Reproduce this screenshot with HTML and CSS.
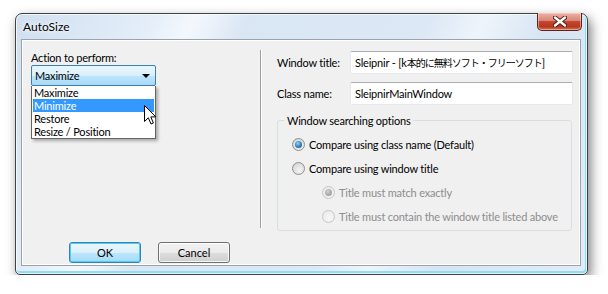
FILE: index.html
```html
<!DOCTYPE html>
<html lang="en">
  <head>
    <meta charset="UTF-8" />
    <title>AutoSize</title>
    <link rel="stylesheet" href="styles.css">
  </head>
  <body>
    <div class="window">
      <div class="titlebar">
        <span class="title">AutoSize</span>
        <button class="close-btn">
          <svg width="14" height="11" viewBox="0 0 14 11">
            <path d="M2 1.5 L12 9.5 M12 1.5 L2 9.5" stroke="#4a1810" stroke-width="4.2" stroke-linecap="round"/>
            <path d="M2 1.5 L12 9.5 M12 1.5 L2 9.5" stroke="#fff" stroke-width="2.4" stroke-linecap="round"/>
          </svg>
        </button>
      </div>

      <div class="client">
        <div class="panes">
          <div class="left-pane">
            <p class="label">Action to perform:</p>
            <div class="combo">
              <span>Maximize</span>
              <span class="combo-arrow"></span>
            </div>
            <ul class="dropdown">
              <li>Maximize</li>
              <li class="selected">Minimize</li>
              <li>Restore</li>
              <li>Resize / Position</li>
            </ul>
          </div>

          <div class="separator"></div>

          <div class="right-pane">
            <div class="field-row">
              <span class="field-label">Window title:</span>
              <div class="textbox">Sleipnir - [k<span class="cjk">本的に無料ソフト・フリーソフト</span>]</div>
            </div>
            <div class="field-row">
              <span class="field-label">Class name:</span>
              <div class="textbox">SleipnirMainWindow</div>
            </div>

            <fieldset class="group">
              <legend>Window searching options</legend>
              <div class="radio-row">
                <span class="radio checked"></span>
                <span>Compare using class name (Default)</span>
              </div>
              <div class="radio-row">
                <span class="radio"></span>
                <span>Compare using window title</span>
              </div>
              <div class="radio-row sub disabled">
                <span class="radio checked"></span>
                <span>Title must match exactly</span>
              </div>
              <div class="radio-row sub disabled">
                <span class="radio"></span>
                <span>Title must contain the window title listed above</span>
              </div>
            </fieldset>
          </div>
        </div>

        <div class="buttons">
          <button class="btn default">OK</button>
          <button class="btn">Cancel</button>
        </div>
      </div>

      <svg class="cursor" width="13" height="21" viewBox="0 0 13 21">
        <path d="M0.5 0.5 L0.5 16.5 L4.3 12.8 L7 19 L9.4 18 L6.8 11.9 L11.8 11.9 Z" fill="#fff" stroke="#000" stroke-width="1"/>
      </svg>
    </div>
  </body>
</html>
```

FILE: styles.css
```css
* {
  margin: 0;
  padding: 0;
  box-sizing: border-box;
}

body {
  background-color: #fff;
  font-family: Lato, "Noto Sans CJK JP", sans-serif;
  font-size: 11px;
  letter-spacing: -0.2px;
  line-height: 15px;
  color: #000;
}

.window {
  position: relative;
  margin: 13px 0 0 15px;
  width: 573px;
  height: 262px;
  padding: 0 6px 8px 5px;
  border: 1px solid #3e4246;
  border-radius: 7px 7px 5px 5px;
  background: linear-gradient(115deg, #cfdff0 0%, #e4eef9 20%, #f4f8fd 26%, #d9e6f4 34%, #dce8f5 60%, #eef4fb 68%, #d6e4f3 78%, #e2ecf7 100%);
  box-shadow: inset 0 0 0 1px rgba(255, 255, 255, 0.75), inset -1px -2px 0 1px #8fdcf3, 3px 5px 12px rgba(0, 0, 0, 0.5);
}

.titlebar {
  display: flex;
  justify-content: space-between;
  align-items: flex-start;
  height: 25px;
}

.title {
  margin: 5px 0 0 2px;
  font-size: 12px;
  letter-spacing: 0;
  text-shadow: 0 0 6px #fff, 0 0 3px #fff;
}

.close-btn {
  display: flex;
  align-items: center;
  justify-content: center;
  width: 45px;
  height: 18px;
  margin: -1px -1px 0 0;
  border: 1px solid #5b2419;
  border-top: none;
  border-radius: 0 0 5px 5px;
  background: linear-gradient(#e9b2a4 0%, #d98575 45%, #c24832 50%, #b8361f 80%, #d2735c 100%);
  box-shadow: inset 0 0 0 1px rgba(255, 220, 210, 0.5);
}

.client {
  height: 227px;
  border: 1px solid #9aa2aa;
  background-color: #f0f0f0;
  box-shadow: inset 0 0 0 1px #fff;
}

.panes {
  display: flex;
  height: 198px;
}

.left-pane {
  flex-shrink: 0;
  width: 238px;
  padding: 10px 0 0 9px;
}

.combo {
  display: flex;
  justify-content: space-between;
  align-items: center;
  width: 125px;
  height: 21px;
  padding: 0 4px 0 3px;
  border: 1px solid #3c7fb1;
  border-radius: 2px;
  background: linear-gradient(#eaf6fd 0%, #d9f0fc 50%, #bee6fd 51%, #a7d9f5 100%);
}

.combo-arrow {
  width: 0;
  height: 0;
  border-left: 4px solid transparent;
  border-right: 4px solid transparent;
  border-top: 4px solid #000;
  margin-right: 1px;
}

.dropdown {
  list-style: none;
  width: 125px;
  padding: 0 1px;
  border: 1px solid #646464;
  border-top: none;
  background-color: #fff;
  box-shadow: 2px 2px 3px rgba(0, 0, 0, 0.3);
}

.dropdown li {
  height: 13px;
  line-height: 13px;
  padding-left: 1px;
}

.dropdown .selected {
  background-color: #3399ff;
  color: #fff;
}

.separator {
  flex-shrink: 0;
  width: 2px;
  height: 178px;
  margin-top: 10px;
  border-left: 1px solid #a0a0a0;
  border-right: 1px solid #fff;
}

.right-pane {
  padding: 11px 0 0 15px;
}

.field-row {
  display: flex;
  align-items: center;
  margin-bottom: 8px;
}

.field-label {
  flex-shrink: 0;
  width: 73px;
  white-space: nowrap;
}

.textbox {
  flex-shrink: 0;
  width: 223px;
  height: 23px;
  padding: 3px 0 0 4px;
  border: 1px solid #e3e9ef;
  border-top-color: #abadb3;
  border-radius: 2px;
  background-color: #fff;
  white-space: nowrap;
  overflow: hidden;
}

.cjk {
  font-size: 10px;
  letter-spacing: -1px;
}

.group {
  min-inline-size: 0;
  width: 295px;
  height: 118px;
  margin-top: 3px;
  padding: 4px 5px 0 14px;
  border: 1px solid #d5dfe5;
  border-radius: 3px;
}

.group legend {
  padding: 0 3px;
  margin-left: -8px;
}

.radio-row {
  display: flex;
  align-items: center;
  gap: 4px;
  height: 24px;
  white-space: nowrap;
}

.radio-row.sub {
  padding-left: 30px;
}

.radio-row.disabled {
  color: #8d8d8d;
}

.radio {
  display: flex;
  align-items: center;
  justify-content: center;
  flex-shrink: 0;
  width: 13px;
  height: 13px;
  border: 1px solid #8e8f8f;
  border-radius: 50%;
  background: radial-gradient(circle at 60% 65%, #f4f4f4 0%, #dedede 60%, #c8c8c8 100%);
}

.radio.checked::after {
  content: "";
  width: 7px;
  height: 7px;
  border-radius: 50%;
  background: radial-gradient(circle at 40% 35%, #8fd2f7 0%, #2f7fbf 55%, #10406e 100%);
}

.disabled .radio {
  border-color: #c6c6c6;
  background: radial-gradient(circle at 60% 65%, #f7f7f7 0%, #ececec 70%);
}

.disabled .radio.checked::after {
  background: radial-gradient(circle at 40% 35%, #d0d0d0 0%, #a0a0a0 70%, #8c8c8c 100%);
}

.buttons {
  display: flex;
  gap: 17px;
  padding: 4px 0 0 47px;
}

.btn {
  width: 72px;
  height: 21px;
  font-family: inherit;
  font-size: 11px;
  border: 1px solid #707070;
  border-radius: 3px;
  background: linear-gradient(#f2f2f2 0%, #ebebeb 50%, #dddddd 51%, #cfcfcf 100%);
  box-shadow: inset 0 0 0 1px rgba(255, 255, 255, 0.8);
}

.btn.default {
  border-color: #3c7fb1;
  background: linear-gradient(#eaf6fd 0%, #d9f0fc 50%, #bee6fd 51%, #a7d9f5 100%);
  box-shadow: inset 0 0 0 1px #48d0f8;
}

.cursor {
  position: absolute;
  left: 128px;
  top: 91px;
}
```
